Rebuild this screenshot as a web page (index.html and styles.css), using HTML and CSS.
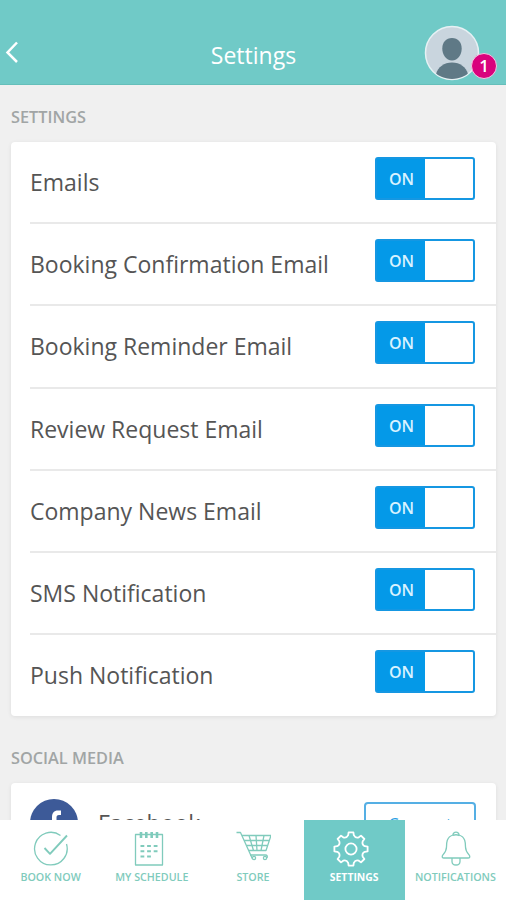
FILE: index.html
```html
<!DOCTYPE html>
<html lang="en">
<head>
    <meta charset="UTF-8">
    <meta name="viewport" content="width=device-width, initial-scale=1.0">
    <title>Settings</title>
    <link rel="stylesheet" href="styles.css">
</head>
<body>

    <header class="header">
        <svg class="back" width="16" height="24" viewBox="0 0 16 24"><path d="M14 2.500L4.500 12.500L14 22"/></svg>
        <h1>Settings</h1>
        <div class="profile">
            <svg width="56" height="56" viewBox="0 0 56 56">
                <defs><clipPath id="face"><circle cx="28" cy="28" r="26"/></clipPath></defs>
                <circle cx="28" cy="28" r="26.500" fill="#c9d5de" stroke="#e6f1f4" stroke-width="1.500"/>
                <g fill="#5f7986" clip-path="url(#face)">
                    <path d="M28 13c6 0 9.700 4.300 9.700 10.500S34 35.500 28 35.500s-9.700-5.800-9.700-12S22 13 28 13z"/>
                    <path d="M12 49c2-7 8-11.500 16-11.500S42 42 44 49c-4 4-9 5-16 5s-12-1-16-5z"/>
                </g>
            </svg>
            <span class="badge">1</span>
        </div>
    </header>

    <main class="content">
        <h2>SETTINGS</h2>
        <div class="card">
            <div class="row"><span class="label">Emails</span><div class="toggle"><span>ON</span></div></div>
            <div class="row"><span class="label">Booking Confirmation Email</span><div class="toggle"><span>ON</span></div></div>
            <div class="row"><span class="label">Booking Reminder Email</span><div class="toggle"><span>ON</span></div></div>
            <div class="row"><span class="label">Review Request Email</span><div class="toggle"><span>ON</span></div></div>
            <div class="row"><span class="label">Company News Email</span><div class="toggle"><span>ON</span></div></div>
            <div class="row"><span class="label">SMS Notification</span><div class="toggle"><span>ON</span></div></div>
            <div class="row"><span class="label">Push Notification</span><div class="toggle"><span>ON</span></div></div>
        </div>

        <h2 class="social-title">SOCIAL MEDIA</h2>
        <div class="card social">
            <svg width="48" height="48" viewBox="0 0 48 48">
                <circle cx="24" cy="24" r="24" fill="#3d5a98"/>
                <path fill="#fff" d="M22 40V26h-4v-5h4v-3c0-4 2-6.500 6-6.500h3V16h-2c-2 0-2.500 1-2.500 2.500V21H31l-.6 5h-3.900v14z"/>
            </svg>
            <span class="label">Facebook</span>
            <button type="button" class="connect">Connect</button>
        </div>
    </main>

    <nav class="tabs">
        <a class="tab">
            <svg width="36" height="36" viewBox="0 0 36 36">
                <path d="M27.500 4.500A16.300 16.300 0 1 0 33.500 13"/>
                <path d="M11.500 17L17 22.800L34 4.500" stroke-width="1.900"/>
            </svg>
            <span>BOOK NOW</span>
        </a>
        <a class="tab">
            <svg class="shifted" width="36" height="36" viewBox="0 0 36 36">
                <path d="M4.500 3.500H31.500V34H4.500z"/>
                <path d="M10 1v6M15.300 1v6M20.700 1v6M26 1v6" stroke-width="2.600"/>
                <path d="M9.500 15h17M9.500 20.200h17M9.500 25.500h11" stroke-width="2" stroke-dasharray="3.800 2.800"/>
            </svg>
            <span>MY SCHEDULE</span>
        </a>
        <a class="tab">
            <svg width="36" height="36" viewBox="-1 0 36 36">
                <path d="M.5 1.500H4.500L16.500 28"/>
                <path d="M6 4.500H35L30 19.500H13M8 9.500H33M10.500 14.500H31.500M13 4.500L17.500 19.500M20 4.500L21 19.500M28 4.500L25 19.500M14 24H29.500Q32 24 31 27"/>
                <circle cx="18" cy="27" r="1.600"/>
                <circle cx="29" cy="27" r="1.600"/>
            </svg>
            <span>STORE</span>
        </a>
        <a class="tab active">
            <svg class="shifted" width="36" height="36" viewBox="-18 -18 36 36">
                <path d="M-2.400-16.600H2.400L2.800-13.800Q4.400-10.600 7.800-11.700L10-13.400L13.400-10L11.700-7.800Q10.600-4.400 13.800-2.800L16.600-2.400V2.400L13.800 2.800Q10.600 4.400 11.700 7.800L13.400 10L10 13.400L7.800 11.700Q4.400 10.600 2.800 13.800L2.400 16.600H-2.400L-2.800 13.800Q-4.400 10.600-7.800 11.700L-10 13.400L-13.400 10L-11.700 7.800Q-10.600 4.400-13.800 2.800L-16.600 2.400V-2.400L-13.800-2.800Q-10.600-4.400-11.700-7.800L-13.400-10L-10-13.400L-7.800-11.700Q-4.400-10.600-2.800-13.800z"/>
                <circle r="5.600"/>
            </svg>
            <span>SETTINGS</span>
        </a>
        <a class="tab">
            <svg width="36" height="36" viewBox="-1 0 36 36">
                <path d="M15 4C8.500 6 8.500 12 8.500 16C8.500 20 7 21.500 4.500 24.500Q3.500 27 6 27H30Q32.500 27 31.500 24.500C29 21.500 27.500 20 27.500 16C27.500 12 27.500 6 21 4"/>
                <path d="M15 4.500C14.500 0 21.500 0 21 4.500Q18 3 15 4.500M14 27v3.500q0 3.500 4 3.500t4-3.500V27"/>
            </svg>
            <span>NOTIFICATIONS</span>
        </a>
    </nav>

</body>
</html>
```
FILE: styles.css
```css
* {
    box-sizing: border-box;
}
body {
    margin: 0;
    height: 900px;
    overflow: hidden;
    display: flex;
    flex-direction: column;
    font-family: "Open Sans", "Noto Sans", sans-serif;
    background-color: #f0f0f0;
    color: #555;
}
.header {
    flex: none;
    height: 85px;
    padding: 25px 0 0 3px;
    display: grid;
    grid-template-columns: 40px 1fr 82px;
    background-color: #70cac7;
    border-bottom: 1px solid #65bfba;
    color: white;
}
.back {
    margin-top: 15px;
    fill: none;
    stroke: white;
    stroke-width: 2.5;
}
.header h1 {
    margin: 15px 0 0 40px;
    font-size: 23px;
    line-height: 30px;
    font-weight: 400;
    text-align: center;
}
.profile {
    position: relative;
}
.badge {
    position: absolute;
    left: 47px;
    top: 28px;
    width: 26px;
    height: 26px;
    border: 1px solid #f3c9e2;
    border-radius: 50%;
    background-color: #d9027d;
    font-size: 17px;
    line-height: 24px;
    font-weight: 600;
    text-align: center;
}
.content {
    flex: 1;
    min-height: 0;
    overflow: hidden;
    padding: 0 10px 0 11px;
}
h2 {
    margin: 20px 0 13px;
    font-size: 16.3px;
    line-height: 24px;
    font-weight: 600;
    color: #a1a5a5;
}
h2.social-title {
    margin: 30px 0 13px;
}
.card {
    background-color: white;
    border-radius: 4px;
    box-shadow: 0 1px 4px rgba(0, 0, 0, 0.08);
}
.row {
    height: 82.2px;
    margin-left: 19px;
    padding: 15px 21px 0 0;
    display: flex;
    align-items: flex-start;
    justify-content: space-between;
    border-bottom: 2px solid #e9e9e9;
}
.row:last-child {
    height: 80.8px;
    border-bottom: none;
}
.label {
    font-size: 23px;
    line-height: 51px;
}
.toggle {
    width: 100px;
    height: 43px;
    border: 2px solid #1597e2;
    border-radius: 3px;
    background: linear-gradient(to right, #0499e8 48px, white 48px);
}
.toggle span {
    display: block;
    width: 49px;
    font-size: 16px;
    line-height: 40px;
    font-weight: 600;
    text-align: center;
    color: #d8f2ff;
}
.social {
    height: 82px;
    padding: 16px 20px 0 19px;
    display: flex;
    align-items: flex-start;
}
.social .label {
    flex: 1;
    margin-left: 20px;
    line-height: 48px;
}
.connect {
    width: 112px;
    height: 43px;
    margin-top: 3px;
    padding-top: 2px;
    border: 2px solid #55afe4;
    border-radius: 4px;
    background-color: white;
    font-family: inherit;
    font-size: 16.5px;
    color: #299fe3;
}
.tabs {
    flex: none;
    height: 80px;
    display: grid;
    grid-template-columns: repeat(5, 1fr);
    background-color: white;
}
.tab {
    min-width: 0;
    padding-top: 11px;
    display: flex;
    flex-direction: column;
    align-items: center;
    color: #80cbbc;
}
.tab svg {
    flex: none;
    fill: none;
    stroke: currentColor;
    stroke-width: 1.3;
    stroke-linejoin: round;
}
.tab svg.shifted {
    margin-right: 6px;
}
.tab span {
    margin-top: 3px;
    font-size: 10.7px;
    line-height: 15px;
    font-weight: 600;
    white-space: nowrap;
}
.tab.active {
    background-color: #70cac7;
    color: white;
}
.tab.active svg {
    stroke-width: 1.8;
}
.tab.active span {
    font-weight: 700;
    font-size: 10.4px;
}
```
